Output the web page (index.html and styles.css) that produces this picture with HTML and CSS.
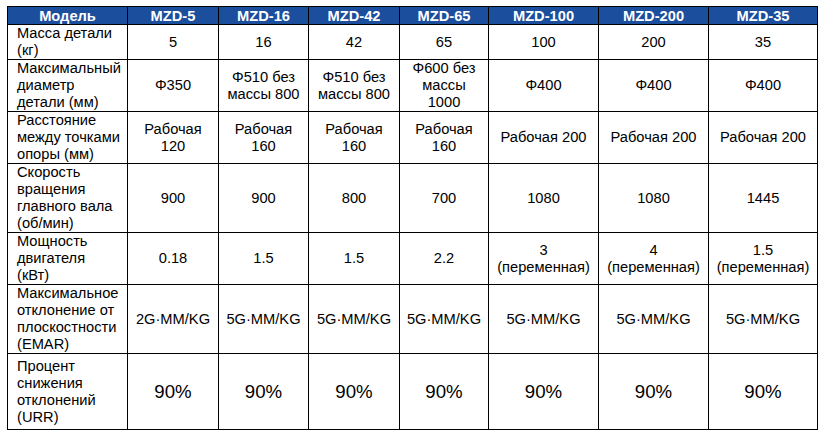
FILE: index.html
```html
<!DOCTYPE html>
<html lang="ru">
<head>
<meta charset="utf-8">
<title>MZD</title>
<link rel="stylesheet" href="styles.css">
</head>
<body>
<table class="spec">
  <colgroup>
    <col class="c-name"><col class="c-s"><col class="c-s2"><col class="c-s"><col class="c-s3"><col class="c-l"><col class="c-l"><col class="c-l2">
  </colgroup>
  <thead>
    <tr class="r-head">
      <th>Модель</th><th>MZD-5</th><th>MZD-16</th><th>MZD-42</th><th>MZD-65</th><th>MZD-100</th><th>MZD-200</th><th>MZD-35</th>
    </tr>
  </thead>
  <tbody>
    <tr class="r1">
      <td class="name">Масса детали (кг)</td><td>5</td><td>16</td><td>42</td><td>65</td><td>100</td><td>200</td><td>35</td>
    </tr>
    <tr class="r2">
      <td class="name">Максимальный диаметр детали (мм)</td><td>Φ350</td><td>Φ510 без<br>массы 800</td><td>Φ510 без<br>массы 800</td><td>Φ600 без<br>массы<br>1000</td><td>Φ400</td><td>Φ400</td><td>Φ400</td>
    </tr>
    <tr class="r3">
      <td class="name">Расстояние между точками опоры (мм)</td><td>Рабочая<br>120</td><td>Рабочая<br>160</td><td>Рабочая<br>160</td><td>Рабочая<br>160</td><td>Рабочая 200</td><td>Рабочая 200</td><td>Рабочая 200</td>
    </tr>
    <tr class="r4">
      <td class="name">Скорость вращения главного вала (об/мин)</td><td>900</td><td>900</td><td>800</td><td>700</td><td>1080</td><td>1080</td><td>1445</td>
    </tr>
    <tr class="r5">
      <td class="name">Мощность двигателя<br>(кВт)</td><td>0.18</td><td>1.5</td><td>1.5</td><td>2.2</td><td>3<br>(переменная)</td><td>4<br>(переменная)</td><td>1.5<br>(переменная)</td>
    </tr>
    <tr class="r6">
      <td class="name">Максимальное отклонение от плоскостности (EMAR)</td><td>2G·MM/KG</td><td>5G·MM/KG</td><td>5G·MM/KG</td><td>5G·MM/KG</td><td>5G·MM/KG</td><td>5G·MM/KG</td><td>5G·MM/KG</td>
    </tr>
    <tr class="r7">
      <td class="name">Процент снижения отклонений (URR)</td><td class="big">90%</td><td class="big">90%</td><td class="big">90%</td><td class="big">90%</td><td class="big">90%</td><td class="big">90%</td><td class="big">90%</td>
    </tr>
  </tbody>
</table>
</body>
</html>
```

FILE: styles.css
```css
html, body {
  margin: 0;
  padding: 0;
  background: #ffffff;
}

body {
  padding: 6px 0 0 7px;
  font-family: "Liberation Sans", Arial, sans-serif;
  font-size: 14.67px;
  line-height: 17px;
  color: #000000;
}

.spec {
  border-collapse: collapse;
  table-layout: fixed;
  width: 811px;
}

.c-name { width: 120px; }
.c-s { width: 91px; }
.c-s2 { width: 90px; }
.c-s3 { width: 89px; }
.c-l { width: 110px; }
.c-l2 { width: 109px; }

.spec th,
.spec td {
  border: 1px solid #000000;
  padding: 0 4px;
  text-align: center;
  vertical-align: middle;
}

.spec th {
  background: #1c4e9e;
  color: #ffffff;
  font-weight: bold;
  line-height: 16px;
}

.spec td.name {
  text-align: left;
  padding: 0 2px 0 9px;
}

.spec td.big {
  font-size: 18.67px;
}

.r-head { height: 18px; }
.r1 { height: 34px; }
.r2 { height: 52px; }
.r3 { height: 51px; }
.r4 { height: 69px; }
.r5 { height: 52px; }
.r6 { height: 68px; }
.r7 { height: 76px; }
```
